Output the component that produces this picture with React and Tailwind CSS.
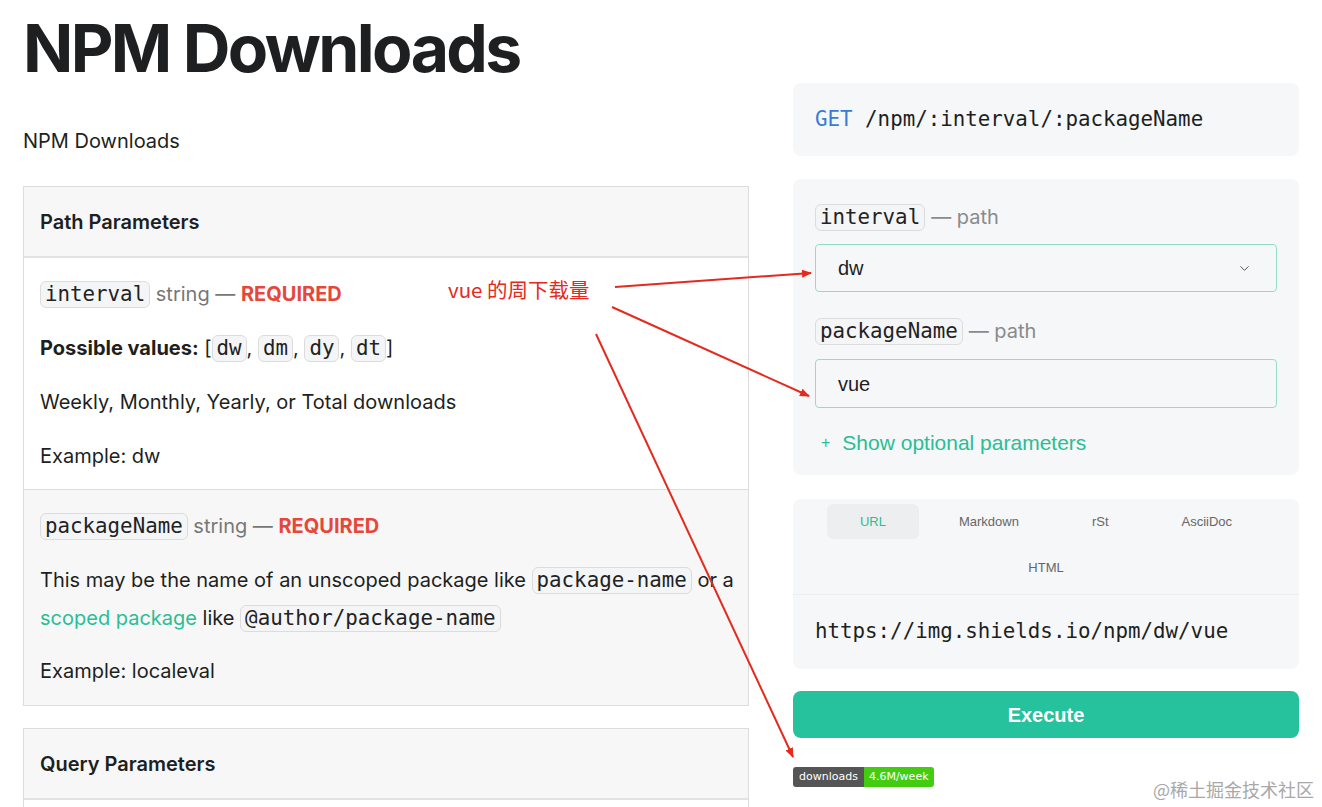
import React from 'react';
import { ChevronDown } from 'lucide-react';

const sans = "font-['Inter',sans-serif]";
const arial = "font-['Liberation_Sans',Arial,sans-serif]";
const mono = "font-['DejaVu_Sans_Mono',monospace]";

const Code = ({ children }) => (
  <code className={`${mono} text-[20.8px] inline-block leading-[25px] px-[4px] border border-[#dcdcdc] bg-[#f4f5f6] rounded-[6px] text-[#222]`}>
    {children}
  </code>
);

const Required = ({ name }) => (
  <p className="leading-[34px]">
    <Code>{name}</Code> <span className="text-[#777]">string —</span>{' '}
    <span className="font-bold text-[#e5483b]">REQUIRED</span>
  </p>
);

const tabs = ['URL', 'Markdown', 'rSt', 'AsciiDoc', 'HTML'];

const Arrows = () => (
  <svg className="absolute inset-0 pointer-events-none" width="1322" height="807">
    <defs>
      <marker id="head" markerWidth="10" markerHeight="8" refX="9" refY="4" orient="auto" markerUnits="userSpaceOnUse">
        <path d="M0,0 L10,4 L0,8 z" fill="#e42a1d" />
      </marker>
    </defs>
    <g stroke="#e42a1d" strokeWidth="2" fill="none">
      <line x1="615" y1="287" x2="811" y2="273" markerEnd="url(#head)" />
      <line x1="612" y1="307" x2="809" y2="396" markerEnd="url(#head)" />
      <line x1="596" y1="334" x2="793" y2="757" markerEnd="url(#head)" />
    </g>
  </svg>
);

export default function App() {
  return (
    <div className={`${sans} relative h-[807px] overflow-hidden bg-white text-[#1d1f21]`}>
      <div className="px-[23px] pt-[15px]">
        <h1 className="text-[66px] font-bold leading-none h-[68px] tracking-[-2.6px]">NPM Downloads</h1>

        <div className="flex gap-[44px]">
          {/* left column */}
          <div className="w-[726px] shrink-0">
            <p className="mt-[44px] text-[20px] leading-7">NPM Downloads</p>

            <div className="mt-[31px] border border-[#dcdcdc] text-[20px]">
              <div className="h-[71px] flex items-center px-4 bg-[#f7f7f7] border-b-2 border-[#e2e2e2]">
                <h2 className="font-semibold">Path Parameters</h2>
              </div>
              <div className="px-4 pt-[19px] pb-[16px] space-y-[20px] bg-white">
                <Required name="interval" />
                <p className="leading-[34px]">
                  <span className="font-bold">Possible values:</span> [<Code>dw</Code>, <Code>dm</Code>, <Code>dy</Code>, <Code>dt</Code>]
                </p>
                <p className="leading-[34px]">Weekly, Monthly, Yearly, or Total downloads</p>
                <p className="leading-[34px]">Example: dw</p>
              </div>
              <div className="px-4 pt-[19px] pb-[17px] bg-[#f7f7f7] border-t border-[#dcdcdc]">
                <Required name="packageName" />
                <p className="leading-[38px] mt-[18px] whitespace-nowrap">
                  This may be the name of an unscoped package like <Code>package-name</Code> or a
                  <br />
                  <span className="text-[#2bbd95]">scoped package</span> like <Code>@author/package-name</Code>
                </p>
                <p className="leading-[34px] mt-[17px]">Example: localeval</p>
              </div>
            </div>

            <div className="mt-[22px] border border-[#dcdcdc] text-[20px]">
              <div className="h-[71px] flex items-center px-4 bg-[#f7f7f7] border-b-2 border-[#e2e2e2]">
                <h2 className="font-semibold">Query Parameters</h2>
              </div>
              <div className="h-[80px] bg-white" />
            </div>
          </div>

          {/* right column */}
          <div className="w-[506px] shrink-0 flex flex-col">
            <div className={`${mono} h-[73px] flex items-center px-[22px] bg-[#f6f7f9] rounded-lg text-[20.8px]`}>
              <span className="text-[#3a7bd5]">GET</span>&nbsp;<span>/npm/:interval/:packageName</span>
            </div>

            <div className="mt-[23px] bg-[#f6f7f9] rounded-lg px-[22px] pt-[22px] pb-[16px] text-[20px]">
              <div className="h-[32px] flex items-center gap-[6px]">
                <Code>interval</Code>
                <span className="text-[#8a8a8a]">— path</span>
              </div>
              <div className={`${arial} mt-[11px] h-[48px] flex items-center justify-between pl-[22px] pr-[24px] border border-[#95dcc6] rounded-[4px]`}>
                <span>dw</span>
                <ChevronDown size={15} strokeWidth={1.6} className="text-[#555]" />
              </div>
              <div className="mt-[23px] h-[32px] flex items-center gap-[6px]">
                <Code>packageName</Code>
                <span className="text-[#8a8a8a]">— path</span>
              </div>
              <div className={`${arial} mt-[12px] h-[49px] flex items-center pl-[22px] border border-[#95dcc6] rounded-[4px]`}>
                vue
              </div>
              <div className={`${arial} mt-[19px] h-[32px] flex items-center text-[#2bbd95] text-[21px]`}>
                <span className="text-[16px] ml-[6px] mr-[12px]">+</span>
                <span>Show optional parameters</span>
              </div>
            </div>

            <div className="mt-[24px] bg-[#f6f7f9] rounded-lg">
              <div className="px-[10px] pt-[5px] pb-[9px] flex flex-wrap justify-center gap-x-[7px] gap-y-[11px]">
                {tabs.map((t, i) => (
                  <div
                    key={t}
                    className={`${arial} h-[35px] flex items-center px-[33px] rounded-md text-[13px] ${
                      i === 0 ? 'bg-[#eceef0] text-[#2bbd95]' : 'text-[#666]'
                    }`}
                  >
                    {t}
                  </div>
                ))}
              </div>
              <div className={`${mono} h-[75px] flex items-center px-[22px] border-t border-[#eceef0] text-[20.8px]`}>
                https://img.shields.io/npm/dw/vue
              </div>
            </div>

            <button className={`${arial} mt-[22px] h-[47px] rounded-lg bg-[#26c19d] text-white font-bold text-[20px]`}>
              Execute
            </button>

            <div className="mt-[29px] flex h-[20px] w-fit rounded-[3px] overflow-hidden font-['DejaVu_Sans',Verdana,sans-serif] text-[11px] text-white">
              <span className="bg-[#555] px-[6px] flex items-center">downloads</span>
              <span className="bg-[#44cc11] px-[5px] flex items-center">4.6M/week</span>
            </div>
          </div>
        </div>
      </div>

      {/* annotation overlay */}
      <div className="absolute left-[448px] top-[276px] text-[20.5px] leading-[26px] text-[#e42a1d] font-['Noto_Sans_CJK_SC',sans-serif]">
        vue 的周下载量
      </div>
      <Arrows />
      <div className="absolute right-[8px] bottom-[4px] text-[18px] text-[#a8a8a8] font-['Noto_Sans_CJK_SC',serif]">
        @稀土掘金技术社区
      </div>
    </div>
  );
}
